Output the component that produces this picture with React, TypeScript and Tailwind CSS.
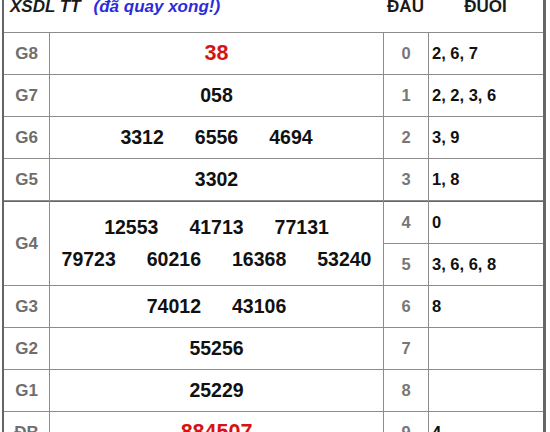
const rows: { label?: string; nums?: string[][]; red?: boolean; span?: boolean; head: string; tail: string }[] = [
  { label: "G8", nums: [["38"]], red: true, head: "0", tail: "2, 6, 7" },
  { label: "G7", nums: [["058"]], head: "1", tail: "2, 2, 3, 6" },
  { label: "G6", nums: [["3312", "6556", "4694"]], head: "2", tail: "3, 9" },
  { label: "G5", nums: [["3302"]], head: "3", tail: "1, 8" },
  {
    label: "G4",
    nums: [
      ["12553", "41713", "77131"],
      ["79723", "60216", "16368", "53240"],
    ],
    span: true,
    head: "4",
    tail: "0",
  },
  { head: "5", tail: "3, 6, 6, 8" },
  { label: "G3", nums: [["74012", "43106"]], head: "6", tail: "8" },
  { label: "G2", nums: [["55256"]], head: "7", tail: "" },
  { label: "G1", nums: [["25229"]], head: "8", tail: "" },
  { label: "ĐB", nums: [["884507"]], red: true, head: "9", tail: "4" },
];

export default function App() {
  return (
    <div className="min-h-screen bg-white font-['Liberation_Sans',Arial,sans-serif]">
      <div className="ml-[2px] w-[544px] border-l-2 border-r-[3px] border-[#666]">
        {/* Header, top cut off by scroll */}
        <div className="flex h-[32px] overflow-hidden text-[17px] font-bold leading-none">
          <div className="-mt-[2px] w-[379px] whitespace-nowrap pl-[6px] italic">
            <span className="text-[#1a1a1a]">XSDL TT</span>
            <span className="ml-[13px] text-[#2b2bdc]">(đã quay xong!)</span>
          </div>
          <div className="-mt-[2px] w-[45px] text-center text-[#1a1a1a]">ĐẦU</div>
          <div className="-mt-[2px] flex-1 text-center text-[#1a1a1a]">ĐUÔI</div>
        </div>

        {/* Result grid */}
        <div className="grid grid-cols-[45px_333px_44px_114px] grid-rows-[41px_41px_41px_41px_42px_41px_41px_41px_41px_41px] gap-px bg-[#8c8c8c] pt-px">
          {rows.map((r, i) => {
            const sep = r.label === "G4" || i === 4;
            return (
              <div key={i} className="contents">
                {r.label && (
                  <div
                    className={`flex items-center justify-center bg-white text-[17px] font-bold text-[#6e6e6e] ${
                      r.span ? "row-span-2" : ""
                    } ${sep ? "border-t border-[#666]" : ""}`}
                  >
                    {r.label}
                  </div>
                )}
                {r.nums && (
                  <div
                    className={`flex flex-col items-center justify-center bg-white font-bold ${
                      r.span ? "row-span-2" : ""
                    } ${sep ? "border-t border-[#666]" : ""} ${
                      r.red ? "text-[21.5px] text-[#d41414]" : "text-[19.5px] text-[#111]"
                    }`}
                  >
                    {r.nums.map((line, j) => (
                      <div key={j} className="flex h-[32px] items-center justify-center gap-[31px]">
                        {line.map((n) => (
                          <span key={n}>{n}</span>
                        ))}
                      </div>
                    ))}
                  </div>
                )}
                <div
                  className={`flex items-center justify-center bg-white text-[16.5px] font-bold text-[#777] ${
                    sep ? "border-t border-[#666]" : ""
                  }`}
                >
                  {r.head}
                </div>
                <div
                  className={`flex items-center bg-white pl-[3px] text-[16.5px] font-bold text-[#111] ${
                    sep ? "border-t border-[#666]" : ""
                  }`}
                >
                  {r.tail}
                </div>
              </div>
            );
          })}
        </div>
      </div>
    </div>
  );
}
